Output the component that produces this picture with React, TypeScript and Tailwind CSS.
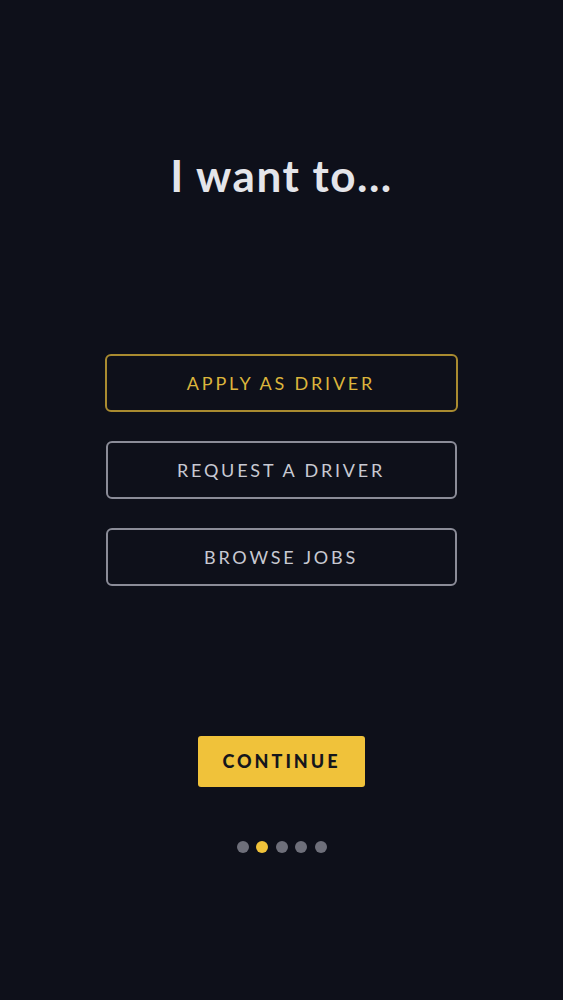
export default function App() {
    const dots = [false, true, false, false, false];

    return (
        <div className="w-[563px] h-[1000px] bg-[#0e101a] flex flex-col items-center font-['Lato','Liberation_Sans',sans-serif]">
            <h1 className="mt-[148px] text-[44px] leading-[54px] font-bold text-[#e4e5ea] tracking-[1.5px]">
                I want to...
            </h1>

            <div className="mt-[152px] flex flex-col gap-[29px] w-[353px] mr-[1px]">
                <button className="h-[58px] rounded-[6px] border-2 border-[#a98b30] text-[#dcb53c] text-[18px] tracking-[2.8px]">
                    APPLY AS DRIVER
                </button>
                <button className="h-[58px] rounded-[6px] border-2 border-[#8b8c98] text-[#c8c9d2] text-[18px] tracking-[2.8px] mx-[1px]">
                    REQUEST A DRIVER
                </button>
                <button className="h-[58px] rounded-[6px] border-2 border-[#8b8c98] text-[#c8c9d2] text-[18px] tracking-[2.8px] mx-[1px]">
                    BROWSE JOBS
                </button>
            </div>

            <button className="mt-[150px] w-[167px] h-[51px] rounded-[3px] bg-[#f0c23a] text-[#15161c] text-[18px] font-black tracking-[3px]">
                CONTINUE
            </button>

            <div className="mt-[54px] flex gap-[7.5px]">
                {dots.map((active, i) => (
                    <span key={i}
                          className={`w-[12px] h-[12px] rounded-full ${active ? "bg-[#f0c23a]" : "bg-[#6e6f7a]"}`} />
                ))}
            </div>
        </div>
    );
}
